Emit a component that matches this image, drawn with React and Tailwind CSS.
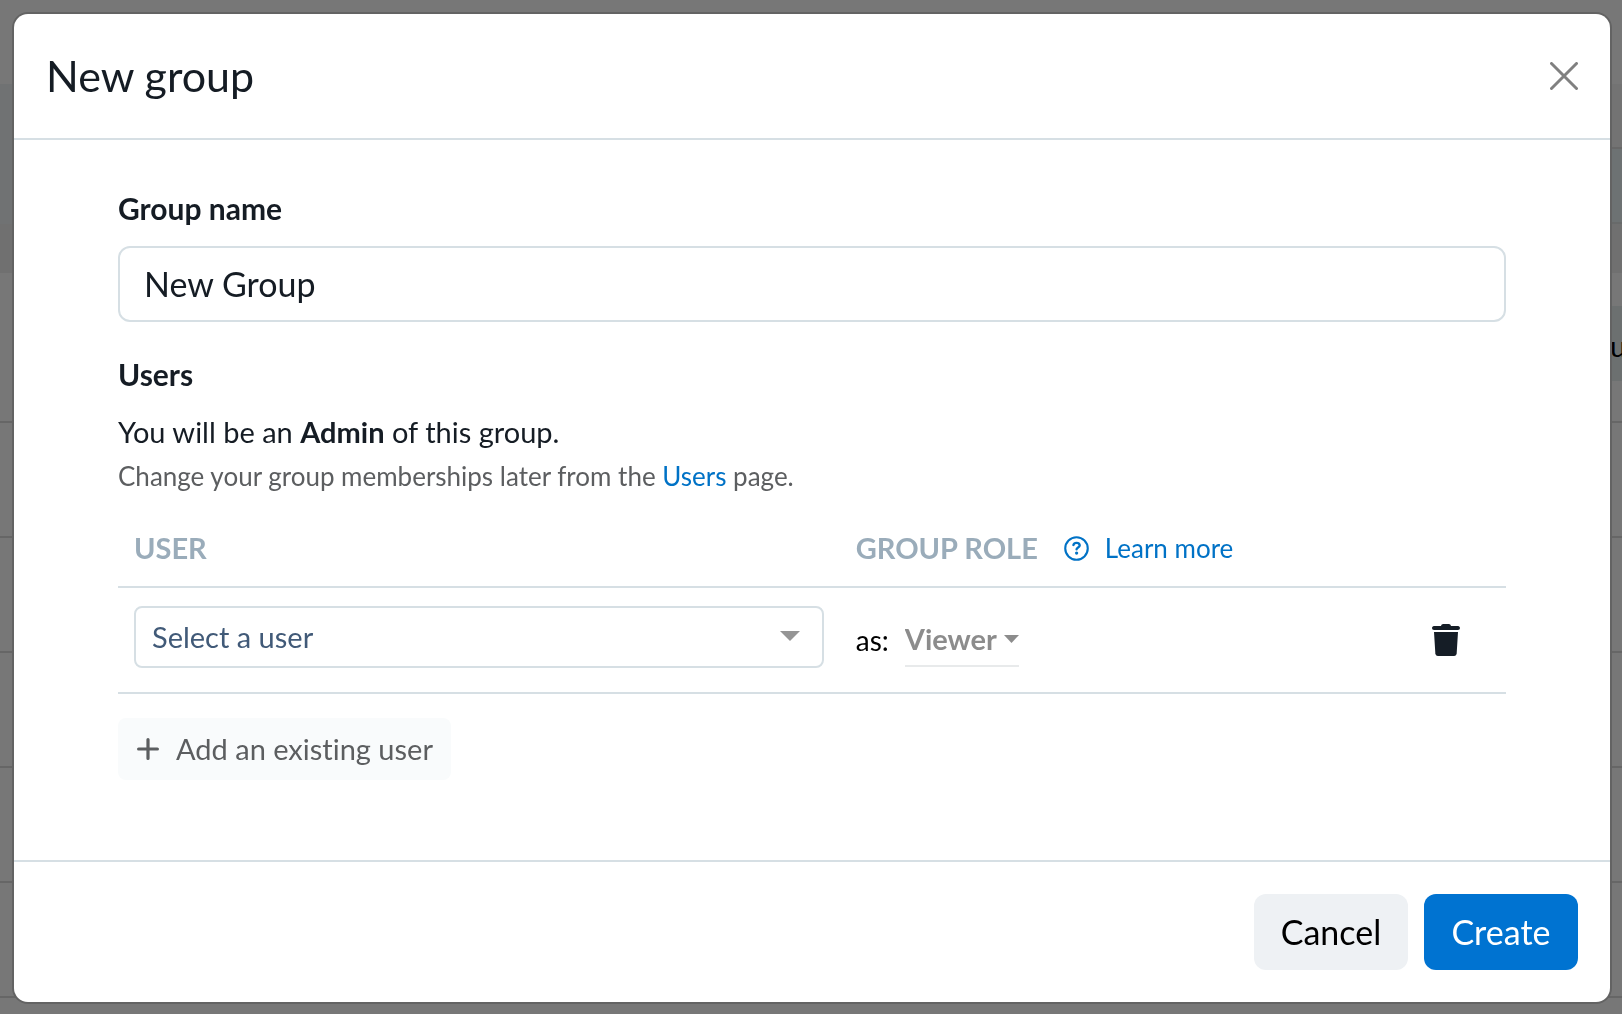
import { useState } from 'react'

const tableRows = [1, 2, 3, 4, 5]

function PageBehind() {
  return (
    <div aria-hidden="true" className="min-h-screen bg-[#777777]">
      <div className="h-[84px]" />
      <div className="flex h-[65px]">
        <div className="w-1/2 bg-[#707273]" />
        <div className="w-1/2 border-b-2 border-[#686868] bg-[#737373]" />
      </div>
      <div className="flex h-[75px]">
        <div className="w-1/2 bg-[#707273]" />
        <div className="w-1/2 border-b-2 border-[#686a6a] bg-[#6d7273]" />
      </div>
      <div className="h-[49px] bg-[#707070]" />
      <div className="h-[33px]" />
      <div className="flex h-[75px] justify-end">
        <div className="flex w-1/2 items-center justify-end bg-[#6c7070] pt-1">
          <div className="w-[12px] text-[29px] leading-[40px] text-black">u</div>
        </div>
      </div>
      <div className="h-[42px] border-b-2 border-[#666666]" />
      {tableRows.map((row) => (
        <div key={row} className="h-[115px] border-b-2 border-[#666666]" />
      ))}
    </div>
  )
}

function CloseIcon() {
  return (
    <svg width="28" height="28" viewBox="0 0 28 28" fill="none" stroke="#808080" strokeWidth="3" strokeLinecap="round">
      <path d="M1.5 1.5 26.5 26.5M26.5 1.5 1.5 26.5" />
    </svg>
  )
}

function HelpIcon() {
  return (
    <svg width="25" height="25" viewBox="0 0 26 26" fill="none" stroke="currentColor" strokeWidth="2.2" strokeLinecap="round" strokeLinejoin="round">
      <circle cx="13" cy="13" r="11.7" />
      <path d="M9.8 9.3c.4-1.500 1.600-2.200 3.200-2.200 1.900 0 3.300 1 3.300 2.700 0 2.100-3.200 2.200-3.200 4.100" strokeWidth="2.5" />
      <circle cx="13.1" cy="17.7" r="1.7" fill="currentColor" stroke="none" />
    </svg>
  )
}

function TrashIcon() {
  return (
    <svg width="28" height="32" viewBox="0 0 28 32" fill="#151d26">
      <path d="M9 2c.3-1.300 1-2 2.200-2h5.600c1.200 0 1.900.7 2.200 2h7c2.600 0 2.600 4 0 4H2C-.6 6-.6 2 2 2z" />
      <path d="M2 8h24l-1.300 21.300c-.1 1.600-1.100 2.700-2.700 2.700H6c-1.600 0-2.600-1.100-2.700-2.700z" />
    </svg>
  )
}

function PlusIcon() {
  return (
    <svg width="24" height="24" viewBox="0 0 24 24" fill="none" stroke="#5c5e60" strokeWidth="3.2" strokeLinecap="round">
      <path d="M12 2.6v18.8M2.6 12h18.8" />
    </svg>
  )
}

function UserRow({ onRemove }) {
  return (
    <tr className="border-b-2 border-[#d6dfe4]">
      <td className="px-4 pt-[18px] pb-6">
        <div className="relative">
          <select
            aria-label="User"
            className="block h-[62px] w-full appearance-none rounded-lg border-2 border-[#d6dfe4] bg-white pr-14 pl-4 text-[29px] text-[#415a78]"
          >
            <option>Select a user</option>
          </select>
          <svg className="pointer-events-none absolute top-[25px] right-[24px]" width="20" height="10" viewBox="0 0 20 10" fill="#959595">
            <path d="M0 0h20L10 10z" />
          </svg>
        </div>
      </td>
      <td className="px-4 py-6">
        <label className="flex items-center gap-4 text-[28px] text-black">
          as:
          <span className="relative">
            <select className="block h-[54px] w-[114px] appearance-none border-b-2 border-[#e8eaeb] bg-transparent text-[29px] font-bold text-[#8c8c8c]">
              <option>Viewer</option>
            </select>
            <svg className="pointer-events-none absolute top-[22px] right-0" width="15" height="8" viewBox="0 0 15 8" fill="#8c8c8c">
              <path d="M0 0h15L7.5 8z" />
            </svg>
          </span>
        </label>
      </td>
      <td className="py-[18px]">
        <button type="button" aria-label="Remove user" onClick={onRemove} className="mx-auto block">
          <TrashIcon />
        </button>
      </td>
    </tr>
  )
}

function App() {
  const [name, setName] = useState('New Group')
  const [users, setUsers] = useState([1])

  const addUser = () => setUsers([...users, Date.now()])
  const removeUser = (id) => setUsers(users.filter((user) => user !== id))

  return (
    <div className="h-screen overflow-hidden font-['Lato',sans-serif] text-[#151c24] [font-variant-ligatures:none]">
      <PageBehind />
      <div className="fixed inset-0 pt-[14px] pr-[12px] pb-[12px] pl-[14px]">
        <form
          role="dialog"
          aria-labelledby="dialog-title"
          onSubmit={(e) => e.preventDefault()}
          className="flex h-full flex-col rounded-[14px] bg-white shadow-[0_0_0_2px_#636363]"
        >
          <header className="flex items-center justify-between border-b-2 border-[#d6dfe4] px-8 py-8">
            <h1 id="dialog-title" className="text-[43px] leading-[60px]">New group</h1>
            <button type="button" aria-label="Close"><CloseIcon /></button>
          </header>

          <main className="flex-1 overflow-hidden px-[104px] pt-[48px]">
            <label htmlFor="group-name" className="block text-[30px] leading-[40px] font-bold">Group name</label>
            <input
              id="group-name"
              type="text"
              value={name}
              onChange={(e) => setName(e.target.value)}
              className="mt-[18px] block h-[76px] w-full rounded-xl border-2 border-[#d6dfe4] px-6 pb-0.5 text-[34px]"
            />

            <h2 className="mt-8 text-[30px] leading-[40px] font-bold">Users</h2>
            <p className="mt-[18px] text-[29px] leading-[40px]">
              You will be an <strong className="font-bold">Admin</strong> of this group.
            </p>
            <p className="mt-1 text-[26px] leading-[40px] text-[#5c5e60]">
              Change your group memberships later from the <a href="#users" className="text-[#0072c6]">Users</a> page.
            </p>

            <table className="mt-5 w-full table-fixed border-collapse">
              <thead>
                <tr className="border-b-2 border-[#d6dfe4] text-left">
                  <th className="w-[52%] px-4 pt-3 pb-[18px] text-[29px] leading-[40px] font-bold text-[#9aacba]">USER</th>
                  <th className="px-4 pt-3 pb-[18px] text-[29px] leading-[40px] font-bold text-[#9aacba]">
                    <div className="flex items-center">
                      GROUP ROLE
                      <a href="#roles" className="ml-[26px] flex items-center gap-4 text-[26px] font-normal text-[#0072c6]">
                        <HelpIcon />
                        Learn more
                      </a>
                    </div>
                  </th>
                  <th className="w-[120px]" aria-label="Actions" />
                </tr>
              </thead>
              <tbody>
                {users.map((id) => (
                  <UserRow key={id} onRemove={() => removeUser(id)} />
                ))}
              </tbody>
            </table>

            <button
              type="button"
              onClick={addUser}
              className="mt-6 flex h-[62px] items-center gap-4 rounded-lg bg-[#f9fbfc] px-[18px] text-[29px] text-[#5c5e60]"
            >
              <PlusIcon />
              Add an existing user
            </button>
          </main>

          <footer className="flex justify-end gap-4 border-t-2 border-[#d6dfe4] px-8 py-8">
            <button type="button" className="h-[76px] min-w-[154px] rounded-xl bg-[#eef1f4] px-6 pb-0.5 text-[34px] text-black">Cancel</button>
            <button type="submit" className="h-[76px] min-w-[154px] rounded-xl bg-[#0073d1] px-6 pb-0.5 text-[34px] text-white">Create</button>
          </footer>
        </form>
      </div>
    </div>
  )
}

export default App
